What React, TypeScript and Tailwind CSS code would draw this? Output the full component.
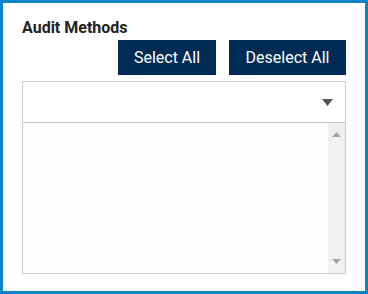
export default function App() {
  return (
    <div
      className="w-[368px] h-[294px] border-[3px] border-[#0a84c6] bg-white px-[19px] pt-[15px]"
      style={{ fontFamily: "Roboto, 'Liberation Sans', sans-serif" }}
    >
      <div className="text-[16px] leading-[20px] font-bold text-[#222]">Audit Methods</div>

      <div className="flex justify-end gap-[13px] mt-[2px]">
        <button className="h-[35px] w-[98px] bg-[#002b55] text-white text-[16px]">Select All</button>
        <button className="h-[35px] w-[117px] bg-[#002b55] text-white text-[16px]">Deselect All</button>
      </div>

      {/* dropdown header */}
      <div className="mt-[6px] w-[324px] border border-[#c4ccd4]">
        <div className="h-[40px] flex items-center justify-end pr-[12px]">
          <svg width="11" height="7" viewBox="0 0 11 7">
            <polygon points="0,0 11,0 5.5,7" fill="#555" />
          </svg>
        </div>

        {/* list box */}
        <div className="h-[151px] border-t border-[#c4ccd4] flex bg-[#fdfdfd]">
          <div className="flex-1" />
          <div className="w-[17px] bg-[#f0f0f0] flex flex-col items-center justify-between pt-[9px] pb-[9px]">
            <svg width="9" height="5" viewBox="0 0 9 5">
              <polygon points="4.5,0 9,5 0,5" fill="#a3a3a3" />
            </svg>
            <svg width="9" height="5" viewBox="0 0 9 5">
              <polygon points="0,0 9,0 4.5,5" fill="#a3a3a3" />
            </svg>
          </div>
        </div>
      </div>
    </div>
  );
}
